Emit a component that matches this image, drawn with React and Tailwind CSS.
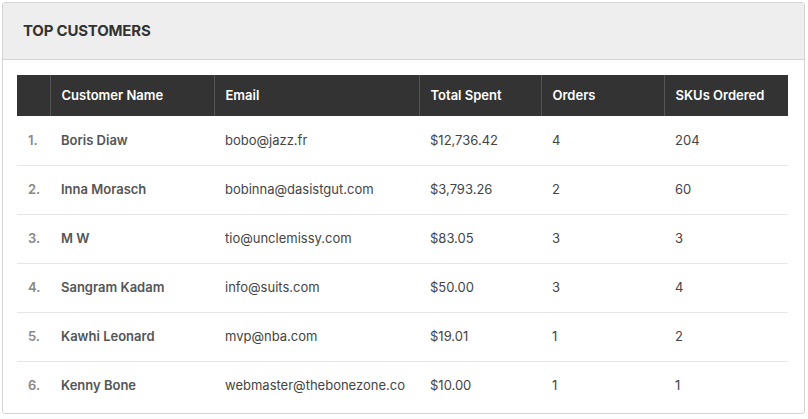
const rows=[["Boris Diaw","bobo@jazz.fr","$12,736.42","4","204"],["Inna Morasch","bobinna@dasistgut.com","$3,793.26","2","60"],["M W","tio@unclemissy.com","$83.05","3","3"],["Sangram Kadam","info@suits.com","$50.00","3","4"],["Kawhi Leonard","mvp@nba.com","$19.01","1","2"],["Kenny Bone","webmaster@thebonezone.co","$10.00","1","1"]];
const heads=["Customer Name","Email","Total Spent","Orders","SKUs Ordered"];
const widths=["w-[33px]","w-[164px]","w-[205px]","w-[122px]","w-[123px]","w-[124px]"];
export default function App(){return(
<div className="w-[808px] h-[419px] bg-white pt-[2px] pl-[2px]" style={{fontFamily:"Inter, 'Liberation Sans', sans-serif"}}>
<div className="w-[803px] h-[412px] border border-[#d4d4d4] rounded-[3px] overflow-hidden">
<div className="h-[57px] bg-[#eeeeee] border-b border-[#d4d4d4] flex items-center pl-[20px] text-[15px] font-bold text-[#333] tracking-[-0.2px]">TOP CUSTOMERS</div>
<div className="pt-[15px] px-[14px]">
<table className="border-collapse table-fixed w-[771px] text-[13px]">
<thead><tr className="bg-[#333333] h-[41px] text-white">
<th className={`${widths[0]} border-r border-[#555]`}></th>
{heads.map((h,i)=><th key={h} className={`${widths[i+1]} text-left font-semibold pl-[11px] ${i<4?"border-r border-[#555]":""}`}>{h}</th>)}
</tr></thead>
<tbody>{rows.map((r,i)=><tr key={i} className={`h-[49px] text-[#444] ${i<5?"border-b border-[#e6e6e6]":""}`}>
<td className="pl-[11px] text-[#888] font-semibold">{i+1}.</td>
<td className="pl-[11px] font-semibold text-[#555]">{r[0]}</td>
{r.slice(1).map((c,j)=><td key={j} className="pl-[11px]">{c}</td>)}
</tr>)}</tbody>
</table></div></div></div>)}
